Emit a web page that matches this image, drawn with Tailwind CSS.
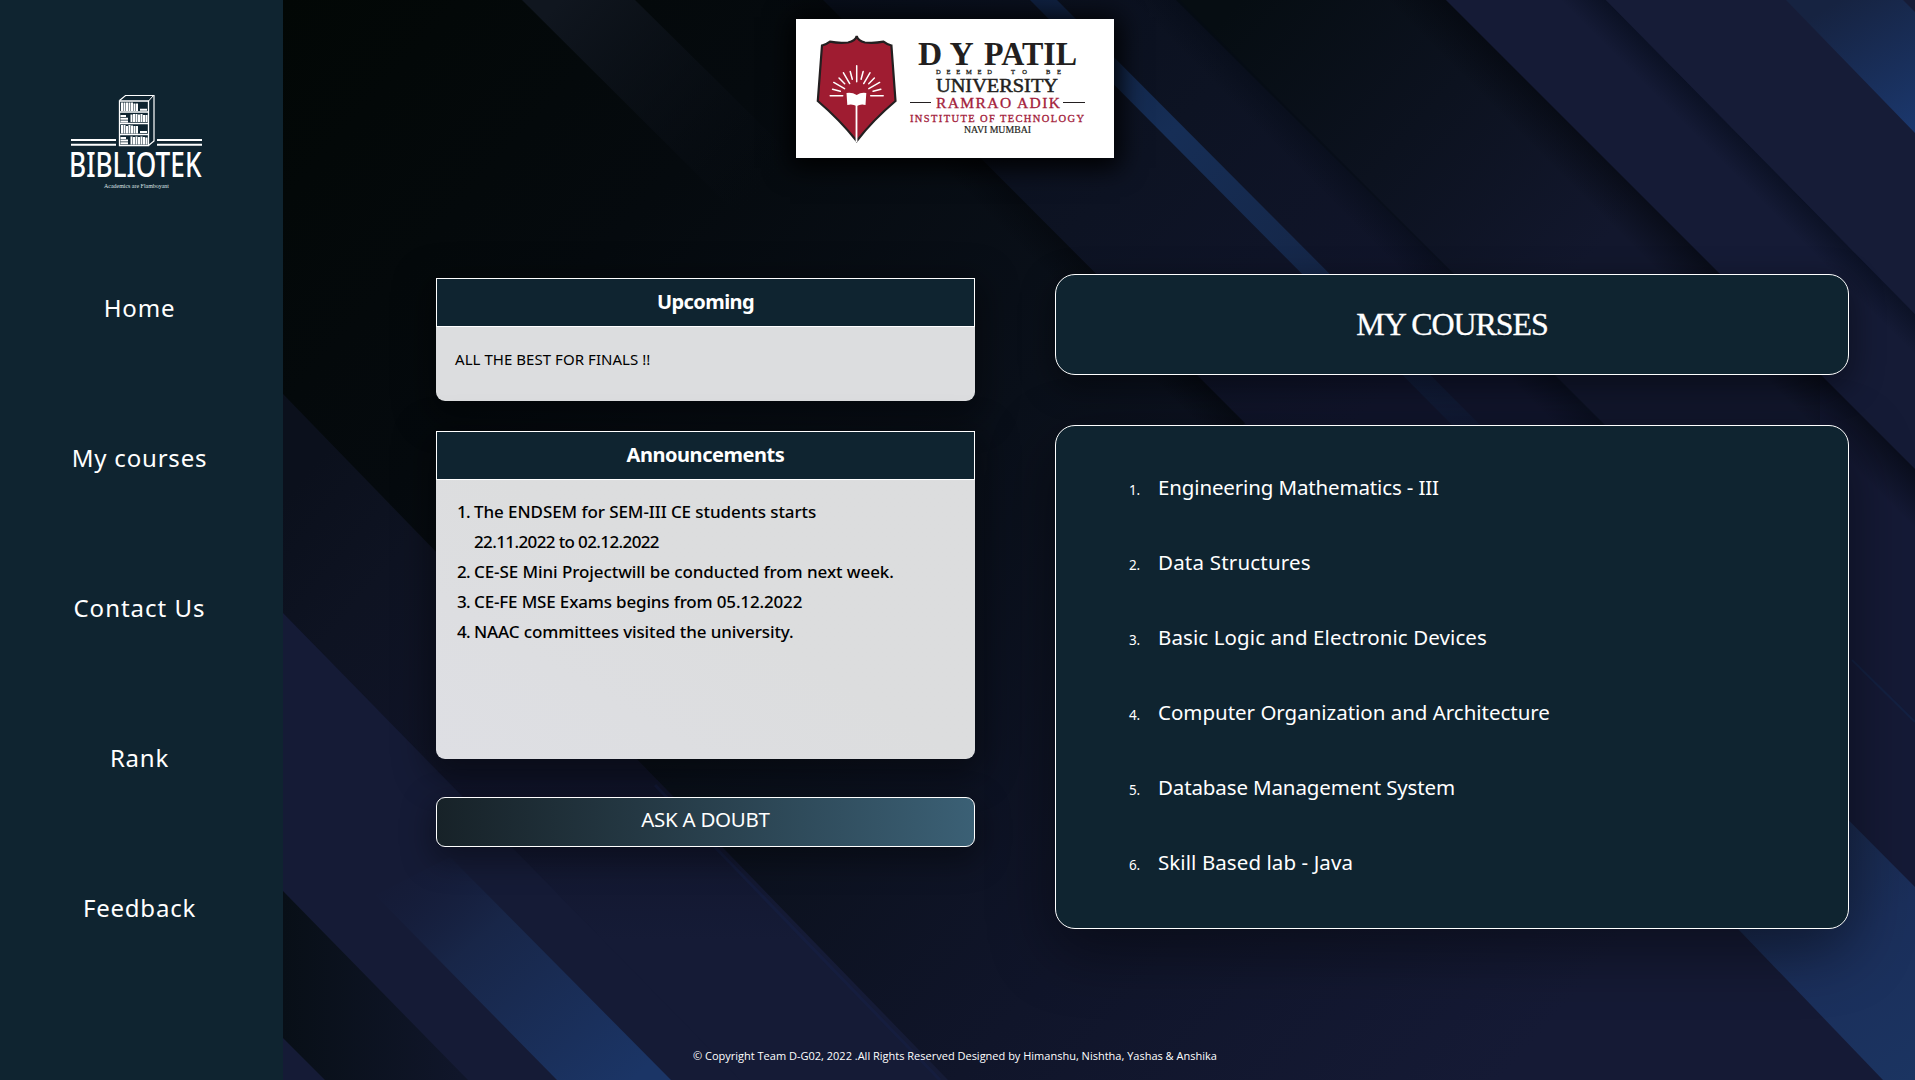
<!DOCTYPE html>
<html lang="en">
<head>
<meta charset="utf-8">
<title>Bibliotek - My Courses</title>
<script src="https://cdn.jsdelivr.net/npm/@tailwindcss/browser@4"></script>
</head>
<body class="relative flex h-[1080px] w-[1915px] overflow-hidden bg-[#080d18] font-['Noto_Sans',sans-serif] text-white">

<!-- Diagonal band backdrop -->
<svg class="absolute inset-0 -z-10" width="1915" height="1080" viewBox="0 0 1915 1080">
  <defs>
    <linearGradient id="base" gradientUnits="userSpaceOnUse" x1="283" y1="0" x2="1500" y2="1080">
      <stop offset="0" stop-color="#020705"/><stop offset=".25" stop-color="#050a0e"/><stop offset=".5" stop-color="#0a101a"/><stop offset=".75" stop-color="#10152a"/><stop offset="1" stop-color="#151a35"/>
    </linearGradient>
    <linearGradient id="stripe" gradientUnits="userSpaceOnUse" x1="560" y1="0" x2="760" y2="190">
      <stop offset="0" stop-color="#10161f"/><stop offset="1" stop-color="#0a0f18" stop-opacity="0"/>
    </linearGradient>
    <linearGradient id="mid" gradientUnits="userSpaceOnUse" x1="820" y1="0" x2="1300" y2="480">
      <stop offset="0" stop-color="#080e1a"/><stop offset=".5" stop-color="#0d1323"/><stop offset="1" stop-color="#11152c"/>
    </linearGradient>
    <linearGradient id="dark" gradientUnits="userSpaceOnUse" x1="1240" y1="0" x2="1560" y2="290">
      <stop offset="0" stop-color="#060d12"/><stop offset=".5" stop-color="#0c121f"/><stop offset="1" stop-color="#12172d"/>
    </linearGradient>
    <linearGradient id="thin" gradientUnits="userSpaceOnUse" x1="1040" y1="0" x2="1480" y2="440">
      <stop offset="0" stop-color="#0f2040"/><stop offset=".3" stop-color="#162e56"/><stop offset=".65" stop-color="#152647"/><stop offset="1" stop-color="#101c38" stop-opacity=".5"/>
    </linearGradient>
    <linearGradient id="corner" gradientUnits="userSpaceOnUse" x1="1840" y1="0" x2="1915" y2="125">
      <stop offset="0" stop-color="#162341"/><stop offset="1" stop-color="#1b376c"/>
    </linearGradient>
    <linearGradient id="lower" gradientUnits="userSpaceOnUse" x1="283" y1="500" x2="520" y2="700">
      <stop offset="0" stop-color="#0b101c"/><stop offset=".4" stop-color="#0e1322"/><stop offset="1" stop-color="#101428"/>
    </linearGradient>
    <linearGradient id="lowfade" gradientUnits="userSpaceOnUse" x1="0" y1="780" x2="0" y2="940">
      <stop offset="0" stop-color="#10142a"/><stop offset="1" stop-color="#151b36"/>
    </linearGradient>
    <linearGradient id="blue" gradientUnits="userSpaceOnUse" x1="410" y1="850" x2="620" y2="1090">
      <stop offset="0" stop-color="#151d3c" stop-opacity="0"/><stop offset=".35" stop-color="#182648"/><stop offset="1" stop-color="#1b3566"/>
    </linearGradient>
    <linearGradient id="blue2" gradientUnits="userSpaceOnUse" x1="1740" y1="840" x2="1915" y2="1080">
      <stop offset="0" stop-color="#182747"/><stop offset=".5" stop-color="#1b2f5b"/><stop offset="1" stop-color="#1b3461"/>
    </linearGradient>
    <linearGradient id="low3" gradientUnits="userSpaceOnUse" x1="283" y1="0" x2="460" y2="0">
      <stop offset="0" stop-color="#080f17"/><stop offset="1" stop-color="#10162a"/>
    </linearGradient>
    <linearGradient id="sh1" gradientUnits="userSpaceOnUse" x1="1446" y1="0" x2="1416" y2="30">
      <stop offset="0" stop-color="#03060c" stop-opacity=".6"/><stop offset="1" stop-color="#03060c" stop-opacity="0"/>
    </linearGradient>
    <linearGradient id="sh2" gradientUnits="userSpaceOnUse" x1="1606" y1="0" x2="1583" y2="23">
      <stop offset="0" stop-color="#040a18" stop-opacity=".6"/><stop offset="1" stop-color="#040a18" stop-opacity="0"/>
    </linearGradient>
    <linearGradient id="sh3" gradientUnits="userSpaceOnUse" x1="1180" y1="0" x2="1155" y2="25">
      <stop offset="0" stop-color="#040a14" stop-opacity=".5"/><stop offset="1" stop-color="#040a14" stop-opacity="0"/>
    </linearGradient>
    <linearGradient id="sh4" gradientUnits="userSpaceOnUse" x1="823" y1="0" x2="798" y2="25">
      <stop offset="0" stop-color="#04070c" stop-opacity=".6"/><stop offset="1" stop-color="#04070c" stop-opacity="0"/>
    </linearGradient>
  </defs>
  <rect width="1915" height="1080" fill="url(#base)"/>
  <path d="M522 0H635L860 222H745Z" fill="url(#stripe)"/>
  <path d="M823 0H1180L1915 735V820H1640Z" fill="url(#mid)"/>
  <path d="M773 0H823L1245 423L1220 448Z" fill="url(#sh4)"/>
  <path d="M1030 0H1057L1500 445H1472Z" fill="url(#thin)"/>
  <path d="M1176 0H1446L1915 465V735Z" fill="url(#dark)"/>
  <path d="M1130 0H1180L1700 520H1650Z" fill="url(#sh3)"/>
  <path d="M1820 373L1915 468V1080H1820Z" fill="#151a36"/>
  <path d="M1380 0H1446L1915 467V533Z" fill="url(#sh1)"/>
  <path d="M1446 0H1915V469Z" fill="#151b36"/>
  <path d="M1560 0H1606L1915 314V358Z" fill="url(#sh2)"/>
  <path d="M1606 0H1915V314Z" fill="#161c37"/>
  <path d="M1786 0H1903L1915 12V133Z" fill="url(#corner)"/>
  <path d="M1852 660L1915 722" stroke="#142142" stroke-width="2"/>
  <path d="M1600 570L1915 887V1080H1883L1600 785Z" fill="url(#blue2)"/>

  <path d="M283 394L948 1080H283Z" fill="url(#lower)"/>
  <path d="M440 780H657L948 1080H735Z" fill="url(#lowfade)"/>
  <path d="M283 613L740 1080H283Z" fill="#151b36"/>
  <path d="M655 785L940 1080" stroke="#16224a" stroke-width="3" opacity=".4"/>
  <path d="M375 895L450 857L671 1080H557Z" fill="url(#blue)"/>
  <path d="M283 891L468 1080H283Z" fill="url(#low3)"/>
  <path d="M283 1038L325 1080H283Z" fill="#151b36"/>
</svg>

<aside class="flex w-[283px] shrink-0 flex-col bg-[#0f2430]">
  <div class="flex h-[233px] flex-col items-start pt-[90px] pl-[66px]">
    <svg class="overflow-visible" width="142" height="104" viewBox="0 0 142 104" fill="none" stroke="#fff">
      <path d="M53.5 10.5L59.5 5.5H88V51L82.5 55.5" stroke-width="1.2"/>
      <path d="M87.5 5.5L82.5 11" stroke-width="1"/>
      <path d="M53.5 11H82.5V55.5H53.5ZM53.5 22H82.5M53.5 33.5H82.5M53.5 44.5H82.5" stroke-width="1.3"/>
      <path d="M56 12.5V21M58.5 12.5V21M61 12.5V21M63.5 12.5V21M66 12.5V21M68.5 13.5V21M71 13.5V21M65.5 24.5V32M68 24V32M70.5 24V32M73 24.5V32M75.5 24V32M78 25V32M80.5 25V32M56 35V43.5M58.5 35V43.5M61 36V43.5M63.5 35V43.5M66 35.5V43.5M68.5 36V43.5M71 36V43.5M65.5 46.5V54.5M68 47V54.5M70.5 46.5V54.5M73 47V54.5M75.5 46.5V54.5M78 47V54.5M80.5 47.5V54.5" stroke-width="2"/>
      <path d="M74 19.8H81M74 42H81M54.5 26H60M54.5 28.8H62M54.5 31.5H62M54.5 48H60M54.5 50.5H62M54.5 53.2H62" stroke-width="2"/>
      <path d="M5 50H50M5 54.8H50M91 50H136M91 54.8H136" stroke-width="2"/>
      <text x="3" y="86.500" textLength="132.500" lengthAdjust="spacingAndGlyphs" font-family="Noto Sans, sans-serif" font-size="34" font-weight="500" fill="#fff" stroke="none">BIBLIOTEK</text>
      <text x="38" y="97.500" textLength="65" lengthAdjust="spacingAndGlyphs" font-family="Liberation Serif, serif" font-size="7" fill="#dfe4e6" stroke="none">Academics are Flamboyant</text>
    </svg>
  </div>
  <nav class="flex w-[279px] flex-col text-center text-2xl leading-[150px] tracking-[0.8px]">
    <a class="h-[150px]">Home</a>
    <a class="h-[150px]">My courses</a>
    <a class="h-[150px] tracking-[1px]">Contact Us</a>
    <a class="h-[150px]">Rank</a>
    <a class="h-[150px]">Feedback</a>
  </nav>
</aside>

<main class="flex grow flex-col">
  <header class="pt-[19px] pl-[513px]">
    <svg class="bg-white shadow-[0_4px_24px_6px_rgba(0,0,0,0.95)]" width="318" height="139" viewBox="0 0 318 139" font-family="Liberation Serif, serif">
      <path d="M60.7 17Q62 22 69 23.5Q78 24.5 87.5 22.7Q91 25.5 95.4 26.5L99.5 82Q77 101 60.7 122Q44 101 21.8 82L26 26.5Q30.5 25.5 34 22.7Q43 24.5 52 23.5Q59.5 22 60.7 17Z" fill="#9f1c31" stroke="#231f20" stroke-width="2.2"/>
      <g stroke="#fff" stroke-width="1.5" stroke-linecap="round" id="rays"></g>
      <path d="M50.5 74Q56 73 60.7 76Q65 73 70.3 74L69.5 86Q65 84.5 60.7 87Q56 84.5 51.3 86Z" fill="#fff"/>
      <path d="M60.5 85V123" stroke="#fff" stroke-width="1.8"/>
      <g fill="#231f20">
        <g font-size="33.5" font-weight="700"><text x="122" y="46">D</text><text x="153.5" y="46">Y</text><text x="188" y="46" textLength="93" lengthAdjust="spacingAndGlyphs">PATIL</text></g>
        <g font-size="6.5" stroke="#231f20" stroke-width=".3"><text x="140" y="54.5" textLength="56">DEEMED</text><text x="215" y="54.5" textLength="16">TO</text><text x="250" y="54.5" textLength="15">BE</text></g>
        <text x="140" y="72.5" font-size="19.5" stroke="#231f20" stroke-width=".5" textLength="122" lengthAdjust="spacingAndGlyphs">UNIVERSITY</text>
        <text x="168" y="113.5" font-size="9.5" stroke="#231f20" stroke-width=".2" textLength="67" lengthAdjust="spacingAndGlyphs">NAVI MUMBAI</text>
      </g>
      <path d="M114 83.5H135M267 83.5H289" stroke="#231f20"/>
      <g fill="#a3203a" stroke="#a3203a" stroke-width=".3">
        <text x="140" y="88.5" font-size="15.5" textLength="124">RAMRAO ADIK</text>
        <text x="114" y="102.5" font-size="10.5" textLength="174">INSTITUTE OF TECHNOLOGY</text>
      </g>
    </svg>
  </header>

  <div class="mt-[116px] flex h-[694px] gap-[80px] pl-[153px]">
    <div class="flex w-[539px] shrink-0 flex-col pt-[4px]">
      <section class="h-[123px] rounded-b-[9px] bg-[#dcdddf] text-black shadow-[0_10px_35px_8px_rgba(0,0,0,0.4)]">
        <h2 class="h-[49px] border border-white bg-[#0f2430] text-center text-[20px] leading-[45px] font-bold tracking-[-0.6px] text-white">Upcoming</h2>
        <p class="pt-[20px] pl-[19px] text-[15px] leading-6 tracking-[0.05px]">ALL THE BEST FOR FINALS !!</p>
      </section>
      <section class="mt-[30px] h-[328px] rounded-b-[9px] bg-linear-to-tr from-[#dedfe4] via-[#dcddde] to-[#dcddde] text-black shadow-[0_10px_35px_8px_rgba(0,0,0,0.4)]">
        <h2 class="h-[49px] border border-white bg-[#0f2430] text-center text-[20px] leading-[45px] font-bold tracking-[-0.45px] text-white">Announcements</h2>
        <ol class="pt-[17px] pl-[21px] text-[17px] leading-[30px] font-medium">
          <li class="flex"><span class="w-[17px] tracking-[-0.8px]">1.</span><span class="tracking-[-0.08px]">The ENDSEM for SEM-III CE students starts<br><span class="tracking-[-0.62px]">22.11.2022 to 02.12.2022</span></span></li>
          <li class="flex"><span class="w-[17px] tracking-[-0.8px]">2.</span><span class="tracking-[-0.08px]">CE-SE Mini Projectwill be conducted from next week.</span></li>
          <li class="flex"><span class="w-[17px] tracking-[-0.8px]">3.</span><span class="tracking-[-0.16px]">CE-FE MSE Exams begins from 05.12.2022</span></li>
          <li class="flex"><span class="w-[17px] tracking-[-0.8px]">4.</span><span class="tracking-[-0.12px]">NAAC committees visited the university.</span></li>
        </ol>
      </section>
      <button class="mt-[38px] h-[50px] rounded-[9px] border border-white bg-linear-to-r from-[#172228] to-[#3b6075] pb-[5px] text-[20.5px] tracking-[-0.27px] shadow-[0_10px_30px_5px_rgba(0,0,0,0.35)]">ASK A DOUBT</button>
    </div>
    <div class="flex w-[794px] shrink-0 flex-col">
      <h1 class="h-[101px] rounded-[20px] border border-white bg-[#0f2430] text-center font-['Liberation_Serif',serif] text-[32px] leading-[99px] tracking-[-1.1px] shadow-[0_10px_30px_5px_rgba(0,0,0,0.35)] [-webkit-text-stroke:0.3px_white]">MY COURSES</h1>
      <ol class="mt-[50px] h-[504px] rounded-[20px] border border-white bg-[#0f2430] pt-[24px] pl-[73px] text-[20.5px] leading-[75px] shadow-[0_20px_60px_5px_rgba(0,0,0,0.4)]">
        <li class="flex h-[75px]"><span class="w-[29px] pt-[3px] text-[13.5px] tracking-[-0.1px]">1.</span><span class="tracking-[-0.14px]">Engineering Mathematics - III</span></li>
        <li class="flex h-[75px]"><span class="w-[29px] pt-[3px] text-[13.5px] tracking-[-0.1px]">2.</span><span class="tracking-[0.2px]">Data Structures</span></li>
        <li class="flex h-[75px]"><span class="w-[29px] pt-[3px] text-[13.5px] tracking-[-0.1px]">3.</span><span class="tracking-[0.1px]">Basic Logic and Electronic Devices</span></li>
        <li class="flex h-[75px]"><span class="w-[29px] pt-[3px] text-[13.5px] tracking-[-0.1px]">4.</span><span class="tracking-[-0.02px]">Computer Organization and Architecture</span></li>
        <li class="flex h-[75px]"><span class="w-[29px] pt-[3px] text-[13.5px] tracking-[-0.1px]">5.</span><span class="tracking-[-0.13px]">Database Management System</span></li>
        <li class="flex h-[75px]"><span class="w-[29px] pt-[3px] text-[13.5px] tracking-[-0.1px]">6.</span><span class="tracking-[0.08px]">Skill Based lab - Java</span></li>
      </ol>
    </div>
  </div>

  <footer class="mt-[80px] pl-[410px] font-['Open_Sans',sans-serif] text-[11px] leading-4 font-medium">© Copyright Team D-G02, 2022 .All Rights Reserved Designed by Himanshu, Nishtha, Yashas &amp; Anshika</footer>
</main>

<script>
  // Thirteen sun rays, fanned over the upper half circle
  const g = document.getElementById('rays');
  for (let i = 0; i <= 12; i++) {
    const a = Math.PI * i / 12, inner = i % 2 ? 17 : 14, outer = i === 6 ? 30 : i % 2 ? 25 : 26.5;
    const l = document.createElementNS('http://www.w3.org/2000/svg', 'path');
    l.setAttribute('d', `M${60.7 - inner * Math.cos(a)} ${76.7 - inner * Math.sin(a)}L${60.7 - outer * Math.cos(a)} ${76.7 - outer * Math.sin(a)}`);
    g.append(l);
  }
</script>
</body>
</html>
